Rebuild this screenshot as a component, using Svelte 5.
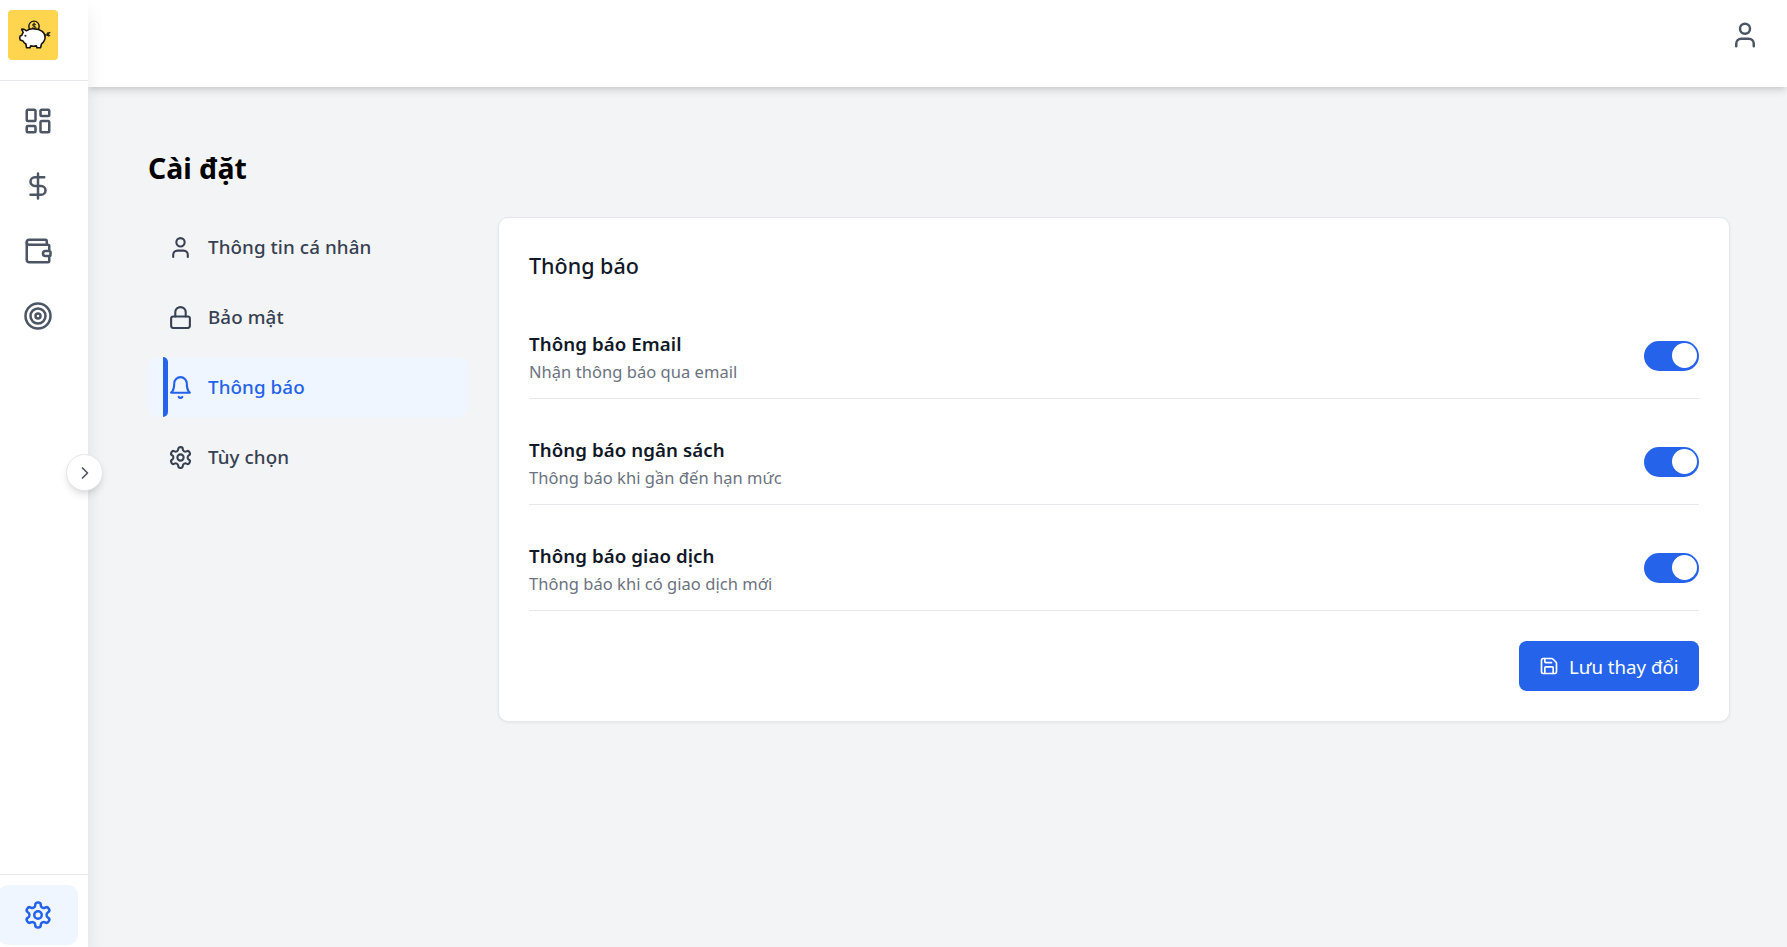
<script>
  const menu = ['dashboard', 'dollar', 'wallet', 'target'];

  const tabs = [
    { icon: 'user', label: 'Thông tin cá nhân' },
    { icon: 'lock', label: 'Bảo mật' },
    { icon: 'bell', label: 'Thông báo' },
    { icon: 'gear', label: 'Tùy chọn' }
  ];

  let active = $state('bell');

  let options = $state([
    { title: 'Thông báo Email', text: 'Nhận thông báo qua email', on: true },
    { title: 'Thông báo ngân sách', text: 'Thông báo khi gần đến hạn mức', on: true },
    { title: 'Thông báo giao dịch', text: 'Thông báo khi có giao dịch mới', on: true }
  ]);
</script>

{#snippet icon(name, size)}
  <svg width={size} height={size} viewBox="0 0 24 24" fill="none" stroke="currentColor" stroke-width="2" stroke-linecap="round" stroke-linejoin="round">
    {#if name === 'dashboard'}
      <rect x="3" y="3" width="7" height="9" rx="1" /><rect x="14" y="3" width="7" height="5" rx="1" />
      <rect x="14" y="12" width="7" height="9" rx="1" /><rect x="3" y="16" width="7" height="5" rx="1" />
    {:else if name === 'dollar'}
      <path d="M12 2v20M17 5H9.5a3.5 3.5 0 0 0 0 7h5a3.5 3.5 0 0 1 0 7H6" />
    {:else if name === 'wallet'}
      <path d="M19 7V4a1 1 0 0 0-1-1H5a2 2 0 0 0 0 4h15a1 1 0 0 1 1 1v4h-3a2 2 0 0 0 0 4h3a1 1 0 0 0 1-1v-2a1 1 0 0 0-1-1" />
      <path d="M3 5v14a2 2 0 0 0 2 2h15a1 1 0 0 0 1-1v-4" />
    {:else if name === 'target'}
      <circle cx="12" cy="12" r="10" /><circle cx="12" cy="12" r="6" /><circle cx="12" cy="12" r="2" />
    {:else if name === 'user'}
      <path d="M19 21v-2a4 4 0 0 0-4-4H9a4 4 0 0 0-4 4v2" /><circle cx="12" cy="7" r="4" />
    {:else if name === 'lock'}
      <rect x="3" y="11" width="18" height="11" rx="2" /><path d="M7 11V7a5 5 0 0 1 10 0v4" />
    {:else if name === 'bell'}
      <path d="M10.268 21a2 2 0 0 0 3.464 0" />
      <path d="M6 8a6 6 0 0 1 12 0c0 7 3 9 3 9H3s3-2 3-9" />
    {:else if name === 'gear'}
      <path d="M12.22 2h-.44a2 2 0 0 0-2 2v.18a2 2 0 0 1-1 1.73l-.43.25a2 2 0 0 1-2 0l-.15-.08a2 2 0 0 0-2.73.73l-.22.38a2 2 0 0 0 .73 2.73l.15.1a2 2 0 0 1 1 1.72v.51a2 2 0 0 1-1 1.74l-.15.09a2 2 0 0 0-.73 2.73l.22.38a2 2 0 0 0 2.73.73l.15-.08a2 2 0 0 1 2 0l.43.25a2 2 0 0 1 1 1.73V20a2 2 0 0 0 2 2h.44a2 2 0 0 0 2-2v-.18a2 2 0 0 1 1-1.73l.43-.25a2 2 0 0 1 2 0l.15.08a2 2 0 0 0 2.73-.73l.22-.39a2 2 0 0 0-.73-2.73l-.15-.08a2 2 0 0 1-1-1.74v-.5a2 2 0 0 1 1-1.74l.15-.09a2 2 0 0 0 .73-2.73l-.22-.38a2 2 0 0 0-2.73-.73l-.15.08a2 2 0 0 1-2 0l-.43-.25a2 2 0 0 1-1-1.73V4a2 2 0 0 0-2-2z" />
      <circle cx="12" cy="12" r="3" />
    {:else if name === 'save'}
      <path d="M15.2 3a2 2 0 0 1 1.4.6l3.8 3.8a2 2 0 0 1 .6 1.4V19a2 2 0 0 1-2 2H5a2 2 0 0 1-2-2V5a2 2 0 0 1 2-2z" />
      <path d="M17 21v-7a1 1 0 0 0-1-1H8a1 1 0 0 0-1 1v7M7 3v4a1 1 0 0 0 1 1h7" />
    {:else if name === 'chevron'}
      <path d="m9 18 6-6-6-6" />
    {/if}
  </svg>
{/snippet}

<div class="app">
  <aside class="sidebar">
    <div class="brand">
      <svg width="50" height="50" viewBox="0 0 50 50">
        <rect width="50" height="50" rx="4" fill="#ffd54f" />
        <g stroke="#17150c" stroke-linecap="round" stroke-linejoin="round">
          <circle cx="26" cy="16.3" r="5.2" fill="#ffd54f" stroke-width="1.4" />
          <path d="M27.7 14.6c-.5-.9-3.2-1-3.2.4 0 1.5 3.3.9 3.3 2.5 0 1.5-2.900 1.4-3.5.3M26.1 13v6.6" fill="none" stroke-width="1" />
          <path d="M13.6 19.2c1.9-.2 3.5.4 4.700 1.6 2.6-1.7 5.3-2.200 8.200-1.9 5.700.1 10.400 3.3 10.600 8 .1 3.200-1.5 5.500-3.700 7.200l-.8 3.600h-3.700l-.5-1.800c-2 .4-3.900.4-5.700 0l-.7 1.800h-3.500l-.6-3.700c-1.400-.8-2.300-1.800-2.900-3l-2.700-1c-.8-1.200-.8-2.700-.1-4.100l1.700-.7c.3-1 .7-1.900 1.300-2.700z" fill="#fff" stroke-width="1.6" />
          <path d="M37.2 24.800c2.200.9 3.800-.2 3.500-1.400-.4-1-2.100-.3-1.500 1.200.5 1.400 1.900 1.700 2.500.9M40.400 23.300l1.500-.8" fill="none" stroke-width="1.2" />
          <circle cx="17.300" cy="25.800" r=".6" fill="#17150c" stroke-width=".7" />
        </g>
      </svg>
    </div>
    <nav class="menu">
      {#each menu as name}
        <button class="tile" aria-label={name}>{@render icon(name, 30)}</button>
      {/each}
    </nav>
    <div class="bottom">
      <button class="tile current" aria-label="Cài đặt">{@render icon('gear', 30)}</button>
    </div>
    <button class="expand" aria-label="Mở rộng">{@render icon('chevron', 20)}</button>
  </aside>

  <div class="body">
    <header class="topbar">{@render icon('user', 30)}</header>
    <main class="content">
      <h1>Cài đặt</h1>
      <div class="columns">
        <nav class="tabs">
          {#each tabs as tab}
            <button class="tab" class:active={active === tab.icon} onclick={() => (active = tab.icon)}>
              {@render icon(tab.icon, 25)}
              <span>{tab.label}</span>
            </button>
          {/each}
        </nav>
        <section class="card">
          <h2>Thông báo</h2>
          <div class="options">
            {#each options as option}
              <div class="option">
                <div class="words">
                  <h3>{option.title}</h3>
                  <p>{option.text}</p>
                </div>
                <button class="switch" class:on={option.on} role="switch" aria-checked={option.on} aria-label={option.title} onclick={() => (option.on = !option.on)}>
                  <span class="knob"></span>
                </button>
              </div>
            {/each}
          </div>
          <div class="actions">
            <button class="save">{@render icon('save', 20)}<span>Lưu thay đổi</span></button>
          </div>
        </section>
      </div>
    </main>
  </div>
</div>

<style>
  :global(body) {
    margin: 0;
    background: #f3f4f6;
  }
  .app, .app * {
    box-sizing: border-box;
  }
  .app {
    display: flex;
    height: 947px;
    overflow: hidden;
    font-family: 'Noto Sans', 'Open Sans', sans-serif;
    color: #111827;
  }
  button {
    border: 0;
    padding: 0;
    background: none;
    font: inherit;
    color: inherit;
    cursor: pointer;
  }
  svg {
    display: block;
    flex: none;
  }
  h1, h2, h3, p {
    margin: 0;
  }
  .sidebar {
    position: relative;
    z-index: 2;
    display: flex;
    flex: none;
    flex-direction: column;
    width: 88px;
    background: #fff;
    color: #4b5563;
    box-shadow: 0 12px 19px -1px rgba(0, 0, 0, 0.09);
  }
  .brand {
    height: 81px;
    padding: 10px 8px;
    border-bottom: 1px solid #e5e7eb;
  }
  .menu {
    display: flex;
    flex: 1;
    flex-direction: column;
    gap: 5px;
    padding-top: 10px;
  }
  .tile {
    display: grid;
    place-items: center;
    width: 80px;
    height: 60px;
    margin-left: -2px;
    border-radius: 10px;
  }
  .bottom {
    height: 73px;
    padding-top: 10px;
    border-top: 1px solid #e5e7eb;
  }
  .current {
    background: #eff6ff;
    color: #2563eb;
  }
  .expand {
    position: absolute;
    top: 454px;
    right: -15px;
    display: grid;
    place-items: center;
    width: 37px;
    height: 37px;
    border: 1px solid #e5e7eb;
    border-radius: 50%;
    background: #fff;
    box-shadow: 0 5px 8px -1px rgba(0, 0, 0, 0.1), 0 3px 5px -3px rgba(0, 0, 0, 0.1);
  }
  .body {
    display: flex;
    flex: 1;
    flex-direction: column;
    min-width: 0;
  }
  .topbar {
    display: flex;
    justify-content: flex-end;
    flex: none;
    height: 87px;
    padding: 20px 27px 0 0;
    background: #fff;
    color: #4b5563;
    box-shadow: 0 5px 8px -1px rgba(0, 0, 0, 0.1), 0 3px 5px -2px rgba(0, 0, 0, 0.1);
  }
  .content {
    padding: 61px 57px 0 60px;
  }
  h1 {
    height: 69px;
    color: #000;
    font-size: 28.4px;
    font-weight: 700;
    line-height: 40px;
  }
  .columns {
    display: flex;
    align-items: flex-start;
    gap: 30px;
  }
  .tabs {
    display: flex;
    flex: none;
    flex-direction: column;
    gap: 10px;
    width: 320px;
  }
  .tab {
    display: flex;
    align-items: center;
    gap: 15px;
    height: 60px;
    padding-left: 20px;
    border-radius: 10px;
    color: #374151;
    font-size: 18.8px;
    font-weight: 530;
    letter-spacing: 0.08px;
    text-align: left;
  }
  .tab.active {
    background: #eff6ff;
    color: #2563eb;
  }
  .tab.active::before {
    content: '';
    width: 5px;
    height: 60px;
    margin: 0 -15px 0 -5px;
    border-radius: 0 5px 5px 0;
    background: #2563eb;
  }
  .card {
    flex: 1;
    height: 505px;
    padding: 30px;
    border: 1px solid #e5e7eb;
    border-radius: 10px;
    background: #fff;
    box-shadow: 0 1px 3px rgba(0, 0, 0, 0.06);
  }
  h2 {
    height: 65px;
    font-size: 21.5px;
    font-weight: 530;
    line-height: 35px;
  }
  .options {
    display: grid;
    gap: 20px;
  }
  .option {
    display: flex;
    align-items: center;
    justify-content: space-between;
    height: 86px;
    border-bottom: 1px solid #e5e7eb;
  }
  .words {
    padding-top: 2px;
  }
  h3 {
    font-size: 18.7px;
    font-weight: 590;
    line-height: 30px;
    letter-spacing: 0.07px;
  }
  p {
    color: #6b7280;
    font-size: 16.5px;
    line-height: 25px;
    letter-spacing: 0.04px;
  }
  .switch {
    display: flex;
    width: 55px;
    height: 30px;
    padding: 2.5px;
    border-radius: 15px;
    background: #e5e7eb;
  }
  .switch.on {
    justify-content: flex-end;
    background: #2563eb;
  }
  .knob {
    width: 25px;
    height: 25px;
    border-radius: 50%;
    background: #fff;
  }
  .actions {
    display: flex;
    justify-content: flex-end;
    padding-top: 30px;
  }
  .save {
    display: flex;
    align-items: center;
    gap: 10px;
    width: 180px;
    height: 50px;
    padding-left: 20px;
    border-radius: 7.5px;
    background: #2563eb;
    color: #fff;
    font-size: 18.7px;
    white-space: nowrap;
  }
</style>
